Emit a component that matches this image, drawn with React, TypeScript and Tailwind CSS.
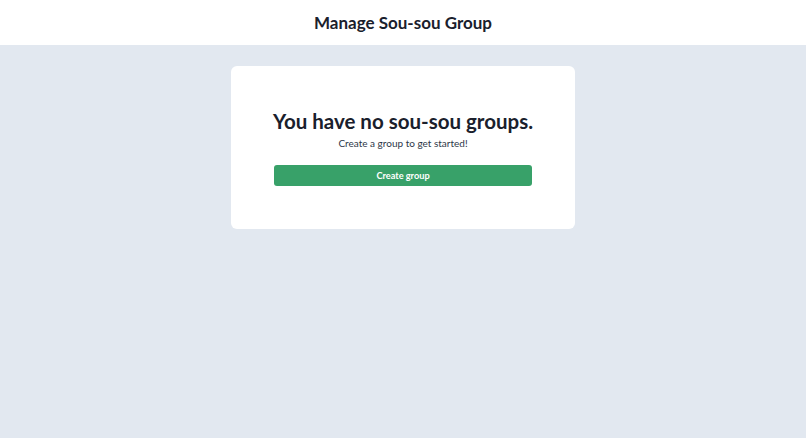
export default function App() {
  return (
    <div className="min-h-[438px] bg-[#e2e8f0] text-[#1a202c]" style={{ fontFamily: 'Lato, "Noto Sans", sans-serif' }}>
      <header className="h-[45px] bg-white flex items-center justify-center">
        <h1 className="text-[17px] font-bold leading-none">Manage Sou-sou Group</h1>
      </header>
      <div className="flex justify-center pt-[21px]">
        <div className="w-[344px] h-[163px] bg-white rounded-[6px] px-[43px] pt-[43px] flex flex-col items-center">
          <h2 className="text-[20.5px] font-bold leading-[24px] whitespace-nowrap">You have no sou-sou groups.</h2>
          <p className="text-[10px] text-[#2d3748] leading-[14px] mt-[3px]">Create a group to get started!</p>
          <button className="mt-[15px] w-full h-[21px] rounded-[3px] bg-[#38a169] text-white text-[9.2px] font-bold">Create group</button>
        </div>
      </div>
    </div>
  );
}
